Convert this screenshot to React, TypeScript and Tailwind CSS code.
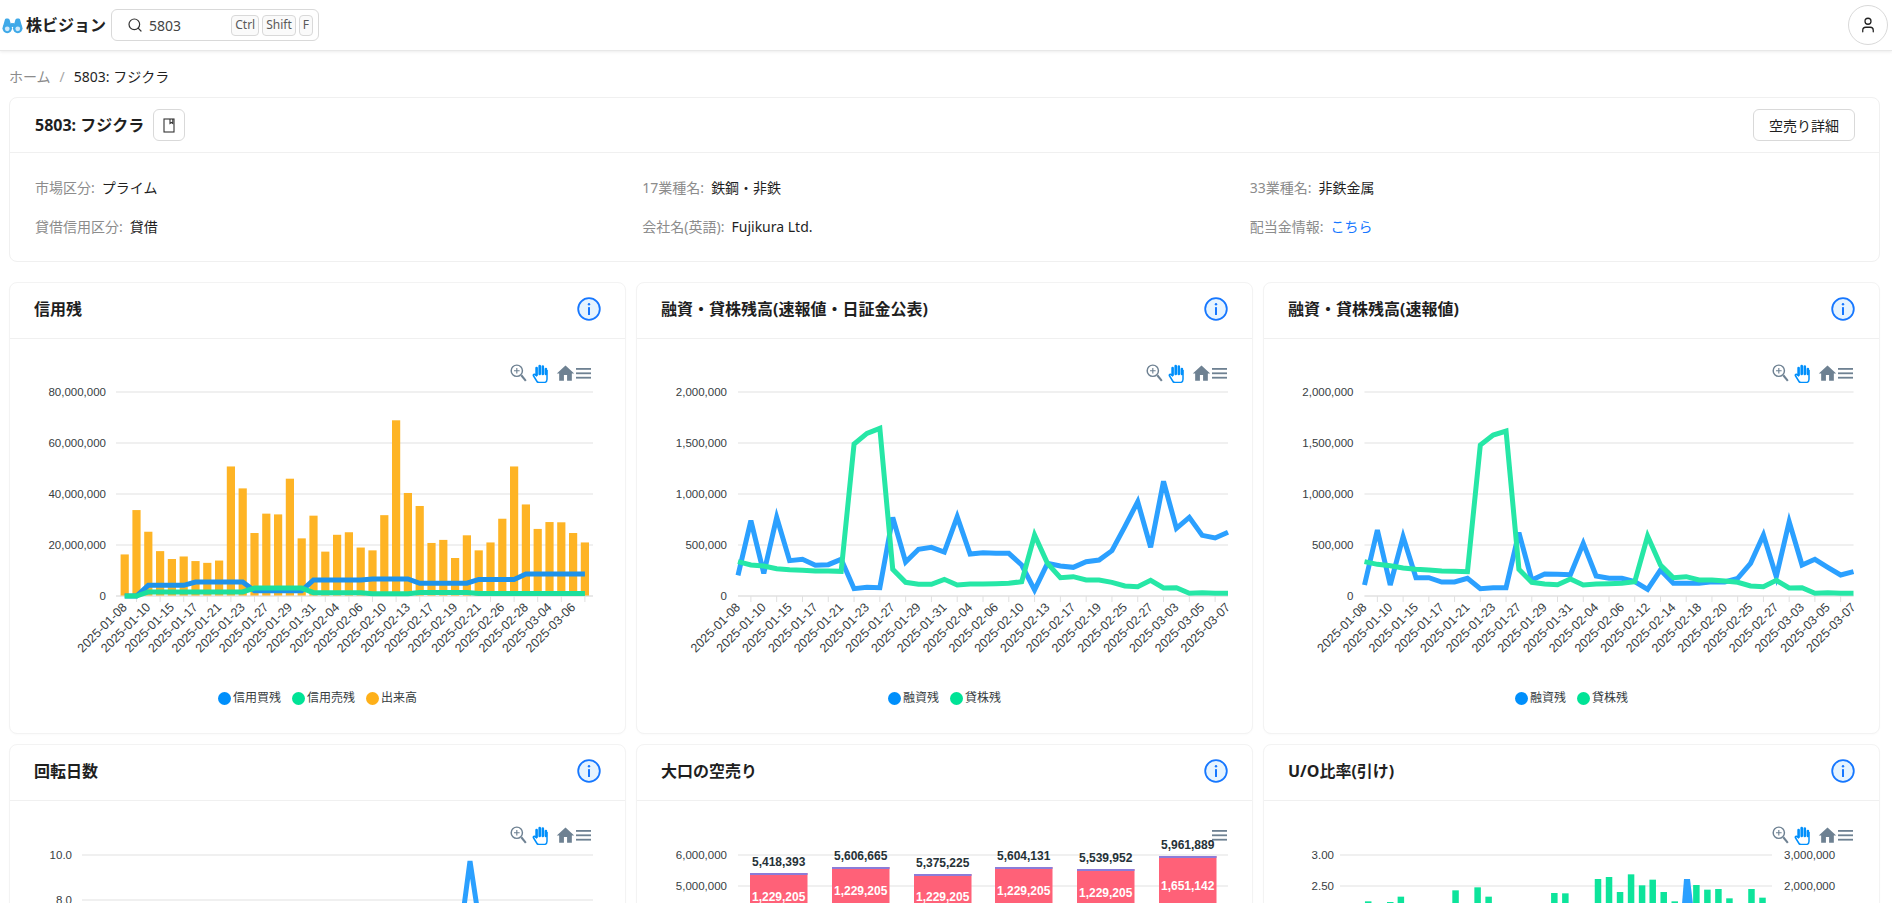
import type { ReactNode } from "react";
import { Search, User } from "lucide-react";

const GRID = "#f0f0f0";

// y positions below are read off the plot in px, x positions are computed per chart
const marginBars = [16.3, 33.7, 25.2, 17.6, 14.5, 15.5, 13.7, 13, 13.9, 50.8, 42.2, 24.7, 32.3, 32, 46, 22.6, 31.5, 17.4, 24, 25, 19, 17.9, 31.7, 68.9, 40.4, 35.3, 20.8, 22, 14.9, 23.8, 17.9, 21, 30.3, 50.8, 35.9, 26.3, 29, 28.9, 24.7, 21];
const marginBuy = [0, 0, 4.2, 4.2, 4.2, 4.2, 5.5, 5.5, 5.5, 5.5, 5.5, 2.1, 2.1, 2.1, 2.1, 2.1, 6.3, 6.3, 6.3, 6.3, 6.3, 6.7, 6.7, 6.7, 6.7, 5, 5, 5, 5, 5, 6.5, 6.5, 6.5, 6.5, 8.6, 8.6, 8.6, 8.6, 8.6, 8.6];
const marginSell = [0, 0, 1.6, 1.6, 1.6, 1.6, 1.6, 1.6, 1.6, 1.6, 1.6, 3.1, 3.1, 3.1, 3.1, 3.1, 1.3, 1.3, 1.3, 1.3, 1.3, 0.9, 0.9, 0.9, 0.9, 1.4, 1.4, 1.4, 1.4, 1.4, 1, 1, 1, 1, 1, 1, 1, 1, 1, 1];

const loanBlue = [886, 722, 880, 712, 842, 838, 856, 854, 838, 926, 922, 923, 712, 846, 808, 802, 816, 710, 822, 818, 820, 820, 855, 930, 850, 858, 862, 845, 840, 812, 740, 665, 802, 604, 745, 712, 766, 774, 757];
const loanGreen = [845, 855, 858, 866, 869, 871, 873, 873, 874, 492, 460, 445, 868, 907, 913, 913, 898, 915, 912, 912, 911, 910, 905, 765, 850, 893, 890, 900, 900, 907, 918, 920, 901, 924, 923, 940, 938, 940, 940];
const quickBlue = [915, 750, 915, 770, 893, 893, 906, 906, 895, 926, 923, 923, 758, 900, 882, 883, 884, 790, 888, 895, 895, 905, 928, 870, 910, 910, 910, 905, 906, 895, 850, 765, 890, 725, 855, 838, 862, 885, 875];
const quickGreen = [845, 853, 857, 864, 868, 870, 873, 874, 875, 495, 465, 453, 868, 907, 912, 914, 897, 915, 912, 911, 910, 905, 768, 855, 893, 890, 900, 900, 903, 907, 918, 920, 901, 924, 923, 940, 938, 940, 940];

const marginLabels = ["01-08", "01-10", "01-15", "01-17", "01-21", "01-23", "01-27", "01-29", "01-31", "02-04", "02-06", "02-10", "02-13", "02-17", "02-19", "02-21", "02-26", "02-28", "03-04", "03-06"];
const loanLabels = ["01-08", "01-10", "01-15", "01-17", "01-21", "01-23", "01-27", "01-29", "01-31", "02-04", "02-06", "02-10", "02-13", "02-17", "02-19", "02-25", "02-27", "03-03", "03-05", "03-07"];
const quickLabels = ["01-08", "01-10", "01-15", "01-17", "01-21", "01-23", "01-27", "01-29", "01-31", "02-04", "02-06", "02-12", "02-14", "02-18", "02-20", "02-25", "02-27", "03-03", "03-05", "03-07"];

const shorts = [
  { x: 113, top: 29, total: "5,418,393", totalY: 18, inner: "1,229,205", innerY: 53 },
  { x: 195, top: 23, total: "5,606,665", totalY: 12, inner: "1,229,205", innerY: 47 },
  { x: 277, top: 30, total: "5,375,225", totalY: 19, inner: "1,229,205", innerY: 53 },
  { x: 358, top: 23, total: "5,604,131", totalY: 12, inner: "1,229,205", innerY: 47 },
  { x: 440, top: 25, total: "5,539,952", totalY: 14, inner: "1,229,205", innerY: 49 },
  { x: 522, top: 12, total: "5,961,889", totalY: 1, inner: "1,651,142", innerY: 42 },
];

const uoBars = [
  [265, 364], [319, 366], [345, 350], [479, 331], [533, 322], [560, 350], [721, 339], [748, 340],
  [828, 297], [855, 291], [882, 336], [909, 283], [936, 316], [962, 299], [989, 336], [1016, 364],
  [1069, 315], [1096, 329], [1123, 327], [1150, 355], [1204, 327], [1231, 353],
];

function toY(raw: number) {
  return raw / 3 - 102;
}

function linePoints(raw: number[], x0: number, x1: number) {
  const step = (x1 - x0) / (raw.length - 1);
  return raw.map((v, i) => `${x0 + i * step},${toY(v)}`).join(" ");
}

function InfoIcon() {
  return (
    <svg width="24" height="24" viewBox="0 0 24 24" className="shrink-0">
      <circle cx="12" cy="12" r="10.8" fill="#e6f4ff" stroke="#1677ff" strokeWidth="1.8" />
      <circle cx="12" cy="7.2" r="1.2" fill="#1677ff" />
      <rect x="11" y="10" width="2" height="8" rx="0.6" fill="#1677ff" />
    </svg>
  );
}

function ChartToolbar({ className, menuOnly }: { className: string; menuOnly?: boolean }) {
  return (
    <div className={`flex h-[18px] items-center justify-end ${className}`}>
      {!menuOnly && (
        <>
          <svg width="17" height="18" viewBox="0 0 15 16" fill="none" stroke="#6e8192" className="mr-[5px]">
            <circle cx="6" cy="6" r="5" strokeWidth="1.3" />
            <path d="M10 10l4 5" strokeWidth="1.8" />
            <path d="M6 3.5v5M3.5 6h5" strokeWidth="1" />
          </svg>
          <svg width="16" height="19" viewBox="0 0 16 19" className="mr-[8px]">
            <path d="M1 11l4 6.5c.5.8 1.4 1 2.2 1h4.5c2 0 3.3-1.4 3.3-3.3V6" fill="#fff" stroke="#008ffb" strokeWidth="1.5" />
            <path d="M1 11c1-1 2-.8 3 .2V10" fill="none" stroke="#008ffb" strokeWidth="1.5" />
            <path d="M4.6 11V4M7.7 10V2M10.8 10V2.5M13.9 10V5" stroke="#008ffb" strokeWidth="2.6" strokeLinecap="round" />
          </svg>
          <svg width="19" height="19" viewBox="0 0 24 24" fill="#6e8192" className="mr-[1px]">
            <path d="M10 21v-7h4v7h6v-9h3L12 2 1 12h3v9z" />
          </svg>
        </>
      )}
      <svg width="15" height="11" viewBox="0 0 15 11" fill="#6e8192">
        <rect y="0" width="15" height="1.8" />
        <rect y="4.4" width="15" height="1.8" />
        <rect y="8.8" width="15" height="1.8" />
      </svg>
    </div>
  );
}

function Legend({ items }: { items: { label: string; color: string }[] }) {
  return (
    <div className="mt-[7px] flex h-[18px] items-center justify-center gap-[11px] text-[12px] text-[#373d3f]">
      {items.map((item) => (
        <span key={item.label} className="flex items-center gap-[2px]">
          <span className={`h-[13px] w-[13px] rounded-full ${item.color}`} />
          {item.label}
        </span>
      ))}
    </div>
  );
}

function YLabels({ labels, x, x1, x0 }: { labels: [string, number][]; x: number; x0: number; x1: number }) {
  return (
    <>
      {labels.map(([text, y]) => (
        <g key={text}>
          <line x1={x0} x2={x1} y1={y} y2={y} stroke={GRID} strokeWidth="2" />
          <text x={x} y={y + 4} textAnchor="end" className="fill-[#373d3f] text-[11.5px]">
            {text}
          </text>
        </g>
      ))}
    </>
  );
}

function XAxis({ labels, first, step, x0, x1 }: { labels: string[]; first: number; step: number; x0: number; x1: number }) {
  return (
    <>
      <line x1={x0} x2={x1} y1={214} y2={214} stroke="#e0e0e0" />
      {labels.map((label, i) => {
        const x = first + i * step;
        const tick = x + step / 2;
        return (
          <g key={label}>
            {tick < x1 && <line x1={tick} x2={tick} y1={214} y2={220} stroke="#e0e0e0" />}
            <text x={x + 3} y={226} textAnchor="end" transform={`rotate(-45 ${x + 3} 226)`} className="fill-[#373d3f] text-[12.5px]">
              {`2025-${label}`}
            </text>
          </g>
        );
      })}
    </>
  );
}

function MarginChart() {
  const cx = (i: number) => 114.7 + i * 11.8;
  const y = (v: number) => 214 - v * 2.55;
  const line = (data: number[]) => data.map((v, i) => `${cx(i)},${y(v)}`).join(" ");
  return (
    <svg width="617" height="300" className="overflow-visible font-['Liberation_Sans',sans-serif]">
      <YLabels
        x={96}
        x0={106}
        x1={583}
        labels={[["80,000,000", 10], ["60,000,000", 61], ["40,000,000", 112], ["20,000,000", 163], ["0", 214]]}
      />
      {marginBars.map((v, i) => (
        <rect key={i} x={cx(i) - 4.1} y={y(v)} width="8.2" height={214 - y(v)} fill="#feb019" fillOpacity="0.95" />
      ))}
      <XAxis labels={marginLabels} first={114.7} step={23.6} x0={106} x1={583} />
      <polyline points={line(marginBuy)} fill="none" stroke="#1f92ea" strokeWidth="5" />
      <polyline points={line(marginSell)} fill="none" stroke="#1cdf9c" strokeWidth="5" />
    </svg>
  );
}

function LoanChart({ blue, green, labels, x0, x1 }: { blue: number[]; green: number[]; labels: string[]; x0: number; x1: number }) {
  return (
    <svg width="617" height="300" className="overflow-visible font-['Liberation_Sans',sans-serif]">
      <YLabels
        x={x0 - 11}
        x0={x0}
        x1={x1}
        labels={[["2,000,000", 10], ["1,500,000", 61], ["1,000,000", 112], ["500,000", 163], ["0", 214]]}
      />
      <XAxis labels={labels} first={x0} step={(x1 - x0) / 19} x0={x0} x1={x1} />
      <polyline points={linePoints(blue, x0, x1)} fill="none" stroke="#2ba0ff" strokeWidth="5" />
      <polyline points={linePoints(green, x0, x1)} fill="none" stroke="#26e7a6" strokeWidth="5" />
    </svg>
  );
}

function TurnoverChart() {
  return (
    <svg width="617" height="300" className="overflow-visible font-['Liberation_Sans',sans-serif]">
      <YLabels x={62} x0={72} x1={583} labels={[["10.0", 11], ["8.0", 56]]} />
      <polyline points="441,110 453,70 460,17 468,70 476,110" fill="none" stroke="#2ba0ff" strokeWidth="5" />
    </svg>
  );
}

function ShortChart() {
  return (
    <svg width="617" height="300" className="overflow-visible font-['Liberation_Sans',sans-serif]">
      <YLabels x={90} x0={101} x1={591} labels={[["6,000,000", 11], ["5,000,000", 42]]} />
      {shorts.map((bar) => (
        <g key={bar.total}>
          <rect x={bar.x} y={bar.top} width="57.5" height={200} fill="#ff6178" />
          <rect x={bar.x} y={bar.top} width="57.5" height="2" fill="#8c7cd8" />
          <text x={bar.x + 28.7} y={bar.totalY + 4} textAnchor="middle" className="fill-[#263238] text-[12px] font-bold">
            {bar.total}
          </text>
          <text x={bar.x + 28.7} y={bar.innerY + 4} textAnchor="middle" className="fill-white text-[12px] font-bold">
            {bar.inner}
          </text>
        </g>
      ))}
    </svg>
  );
}

function UoChart() {
  return (
    <svg width="617" height="300" className="overflow-visible font-['Liberation_Sans',sans-serif]">
      <YLabels x={70} x0={76} x1={508} labels={[["3.00", 11], ["2.50", 42]]} />
      <text x={520} y={15} className="fill-[#373d3f] text-[11.5px]">3,000,000</text>
      <text x={520} y={46} className="fill-[#373d3f] text-[11.5px]">2,000,000</text>
      {uoBars.map(([z, top]) => (
        <rect key={z} x={z / 2.45 - 3.2 - 4} y={top / 3 - 64} width="6.5" height="200" fill="#00e396" fillOpacity="0.95" />
      ))}
      <polygon points="420,35 426,35 429,60 429,70 418,70 418,60" fill="#2ba0ff" />
    </svg>
  );
}

function ChartCard({ title, children, legend }: { title: string; children: ReactNode; legend?: ReactNode }) {
  return (
    <section className="h-[452px] rounded-lg border border-[#f3f3f3] bg-white shadow-[0_1px_2px_rgba(0,0,0,0.02)]">
      <header className="flex h-[56px] items-center justify-between border-b border-[#f0f0f0] px-6 pb-[3px]">
        <h2 className="text-[16px] font-bold text-[#1f1f1f]">{title}</h2>
        <InfoIcon />
      </header>
      <div className="pt-[25px]">
        {children}
        {legend}
      </div>
    </section>
  );
}

function Field({ label, children }: { label: string; children: ReactNode }) {
  return (
    <div className="flex h-[22px] items-center gap-[7px] text-[14px]">
      <span className="text-[#8c8c8c]">{label}:</span>
      <span className="text-[#1f1f1f]">{children}</span>
    </div>
  );
}

function Kbd({ children }: { children: ReactNode }) {
  return (
    <span className="flex h-[21px] items-center rounded-[4px] border border-[#d9d9d9] bg-[#fafafa] px-[3px] text-[12px] text-[#595959]">
      {children}
    </span>
  );
}

export default function App() {
  return (
    <div className="h-[903px] overflow-hidden bg-white font-['Noto_Sans','Noto_Sans_CJK_JP',sans-serif] text-[#1f1f1f]">
      <nav className="flex h-[51px] items-center border-b border-[#e8e8e8] pl-[2px] pr-[4px] shadow-[0_1px_3px_rgba(0,0,0,0.08)]">
        <svg width="21" height="17" viewBox="0 0 22 17" className="mr-[3px]">
          <path d="M3 2.5C3 .8 7.5 .8 8 2.5l2 7H1z" fill="#3fa9e8" />
          <path d="M14 2.5c.5-1.7 5-1.700 5 0l2 7h-9z" fill="#3fa9e8" />
          <circle cx="5.500" cy="11.500" r="5" fill="#3fa9e8" />
          <circle cx="16.500" cy="11.500" r="5" fill="#3fa9e8" />
          <circle cx="5.500" cy="12" r="2.500" fill="#cfeafb" />
          <circle cx="16.500" cy="12" r="2.500" fill="#cfeafb" />
          <rect x="9" y="6" width="4" height="4" fill="#3fa9e8" />
        </svg>
        <span className="text-[16px] font-bold text-[#222]">株ビジョン</span>
        <div className="ml-[5px] flex h-[32px] w-[208px] items-center rounded-md border border-[#d9d9d9] pl-[15px] pr-[5px]">
          <Search size={16} strokeWidth={1.8} className="text-[#333]" />
          <span className="ml-[6px] flex-1 text-[14px] text-[#444]">5803</span>
          <div className="flex gap-[3px]">
            <Kbd>Ctrl</Kbd>
            <Kbd>Shift</Kbd>
            <Kbd>F</Kbd>
          </div>
        </div>
        <button className="ml-auto flex h-[40px] w-[40px] items-center justify-center rounded-full border border-[#d9d9d9]">
          <User size={18} strokeWidth={1.7} className="text-[#222]" />
        </button>
      </nav>

      <main className="pl-[9px] pr-[12px]">
        <div className="mb-[10px] mt-[14px] flex h-[22px] items-center text-[14px]">
          <span className="text-[#8c8c8c]">ホーム</span>
          <span className="mx-[9px] text-[#a6a6a6]">/</span>
          <span className="font-normal">5803: フジクラ</span>
        </div>

        <section className="rounded-lg border border-[#f0f0f0] bg-white">
          <header className="flex h-[55px] items-center border-b border-[#f0f0f0] pl-[25px] pr-[24px]">
            <h1 className="text-[16px] font-bold">5803: フジクラ</h1>
            <button className="ml-[9px] flex h-[32px] w-[32px] items-center justify-center rounded-md border border-[#d9d9d9]">
              <svg width="12" height="15" viewBox="0 0 12 15" fill="none" stroke="#333" strokeWidth="1.1">
                <rect x="1" y="1" width="10" height="13" />
                <path d="M7 1v4.5l1.4-1 1.4 1V1" />
              </svg>
            </button>
            <button className="ml-auto h-[32px] w-[102px] rounded-md border border-[#d9d9d9] text-[14px]">空売り詳細</button>
          </header>
          <div className="grid grid-cols-3 gap-y-[17px] pb-[24px] pl-[25px] pr-[22px] pt-[23px]">
            <Field label="市場区分">プライム</Field>
            <Field label="17業種名">鉄鋼・非鉄</Field>
            <Field label="33業種名">非鉄金属</Field>
            <Field label="貸借信用区分">貸借</Field>
            <Field label="会社名(英語)">Fujikura Ltd.</Field>
            <Field label="配当金情報">
              <span className="text-[#1677ff]">こちら</span>
            </Field>
          </div>
        </section>

        <div className="mt-[20px] grid grid-cols-3 gap-[10px]">
          <ChartCard
            title="信用残"
            legend={
              <Legend
                items={[
                  { label: "信用買残", color: "bg-[#008ffb]" },
                  { label: "信用売残", color: "bg-[#00e396]" },
                  { label: "出来高", color: "bg-[#feb019]" },
                ]}
              />
            }
          >
            <ChartToolbar className="pr-[34px]" />
            <MarginChart />
          </ChartCard>
          <ChartCard
            title="融資・貸株残高(速報値・日証金公表)"
            legend={
              <Legend
                items={[
                  { label: "融資残", color: "bg-[#008ffb]" },
                  { label: "貸株残", color: "bg-[#00e396]" },
                ]}
              />
            }
          >
            <ChartToolbar className="pr-[25px]" />
            <LoanChart blue={loanBlue} green={loanGreen} labels={loanLabels} x0={101} x1={591} />
          </ChartCard>
          <ChartCard
            title="融資・貸株残高(速報値)"
            legend={
              <Legend
                items={[
                  { label: "融資残", color: "bg-[#008ffb]" },
                  { label: "貸株残", color: "bg-[#00e396]" },
                ]}
              />
            }
          >
            <ChartToolbar className="pr-[26px]" />
            <LoanChart blue={quickBlue} green={quickGreen} labels={quickLabels} x0={100.5} x1={589.5} />
          </ChartCard>

          <ChartCard title="回転日数">
            <ChartToolbar className="pr-[34px]" />
            <TurnoverChart />
          </ChartCard>
          <ChartCard title="大口の空売り">
            <ChartToolbar className="pr-[25px]" menuOnly />
            <ShortChart />
          </ChartCard>
          <ChartCard title="U/O比率(引け)">
            <ChartToolbar className="pr-[26px]" />
            <UoChart />
          </ChartCard>
        </div>
      </main>
    </div>
  );
}
